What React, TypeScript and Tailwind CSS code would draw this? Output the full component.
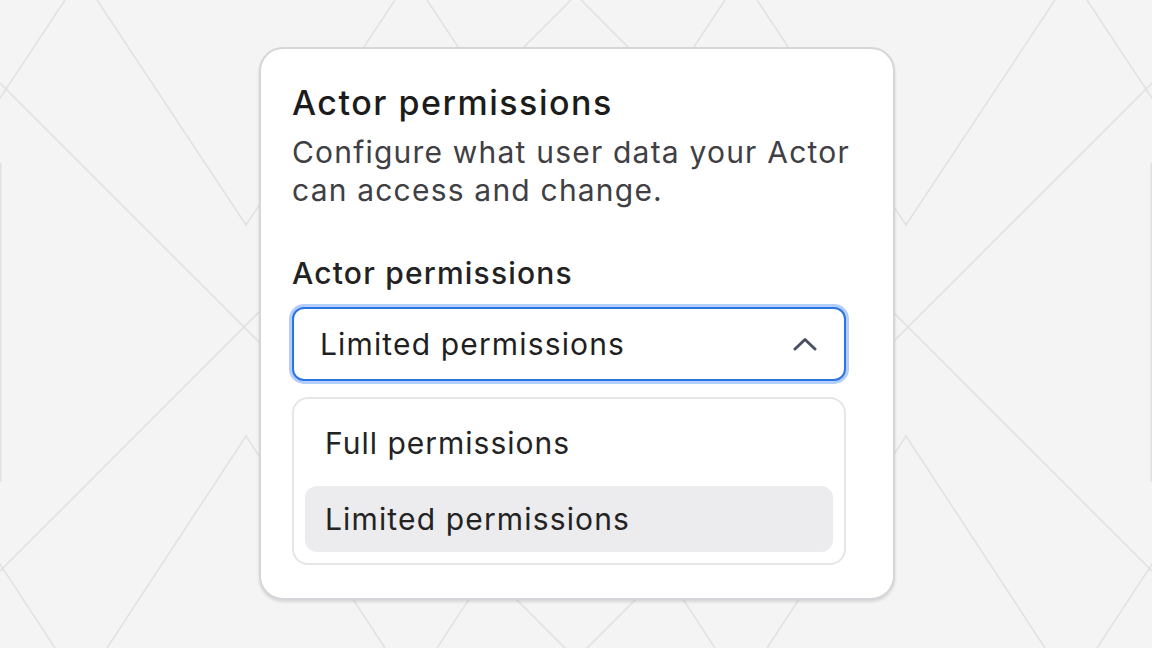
import React from "react";

const valleys = [-84, 246, 576, 906, 1236];

function Pattern() {
  return (
    <svg className="absolute inset-0" width="1152" height="648" viewBox="0 0 1152 648">
      <g stroke="#e2e2e2" strokeWidth="1.6" fill="none">
        {valleys.map((v) => (
          <polyline key={"t" + v} points={`${v - 149},0 ${v},225 ${v + 149},0`} />
        ))}
        {valleys.map((v) => (
          <polyline key={"b" + v} points={`${v - 139},648 ${v},436 ${v + 139},648`} />
        ))}
        <line x1="0" y1="83" x2="565" y2="648" />
        <line x1="0" y1="571" x2="571" y2="0" />
        <line x1="1152" y1="83" x2="587" y2="648" />
        <line x1="1152" y1="571" x2="581" y2="0" />
        <line x1="0.8" y1="163" x2="0.8" y2="482" />
        <line x1="1151.2" y1="163" x2="1151.2" y2="482" />
      </g>
    </svg>
  );
}

export default function App() {
  return (
    <div
      className="relative w-[1152px] h-[648px] overflow-hidden bg-[#f4f4f4]"
      style={{ fontFamily: "Inter, 'Noto Sans', sans-serif" }}
    >
      <Pattern />
      <div className="relative flex pl-[259px] pt-[47px]">
        <div className="w-[636px] rounded-[24px] border-2 border-[#d6d6da] bg-white pl-[31px] pt-[34px] pb-[33px] shadow-[0_2px_3px_rgba(0,0,0,0.12)]">
          <div className="text-[34px] leading-[40px] font-medium tracking-[1.5px] text-[#1c1c1c]">Actor permissions</div>
          <div className="mt-[11px] w-[580px] text-[30px] leading-[37.5px] tracking-[1.2px] text-[#404044]">
            Configure what user data your Actor can access and change.
          </div>
          <div className="mt-[46px] text-[30px] leading-[36px] font-medium tracking-[1.2px] text-[#222222]">Actor permissions</div>
          <div className="mt-[16px] flex h-[74px] w-[554px] items-center justify-between rounded-[12px] border-2 border-[#2a74e6] bg-white pl-[26px] pr-[27px] ring-[3px] ring-[#b4cdfb]">
            <span className="text-[30px] tracking-[1.15px] text-[#1f1f1f]">Limited permissions</span>
            <svg width="24" height="14" viewBox="0 0 24 14">
              <polyline
                points="2,12 12,2.5 22,12"
                fill="none"
                stroke="#4a5165"
                strokeWidth="3"
                strokeLinecap="round"
                strokeLinejoin="round"
              />
            </svg>
          </div>
          <div className="mt-[16px] flex w-[554px] flex-col gap-[10px] rounded-[16px] border-2 border-[#e6e6e8] bg-white p-[11px]">
            <div className="flex h-[66px] items-center rounded-[12px] pl-[20px] text-[30px] tracking-[1px] text-[#232323]">
              Full permissions
            </div>
            <div className="flex h-[66px] items-center rounded-[12px] bg-[#ececee] pl-[20px] text-[30px] tracking-[1.15px] text-[#232323]">
              Limited permissions
            </div>
          </div>
        </div>
      </div>
    </div>
  );
}
